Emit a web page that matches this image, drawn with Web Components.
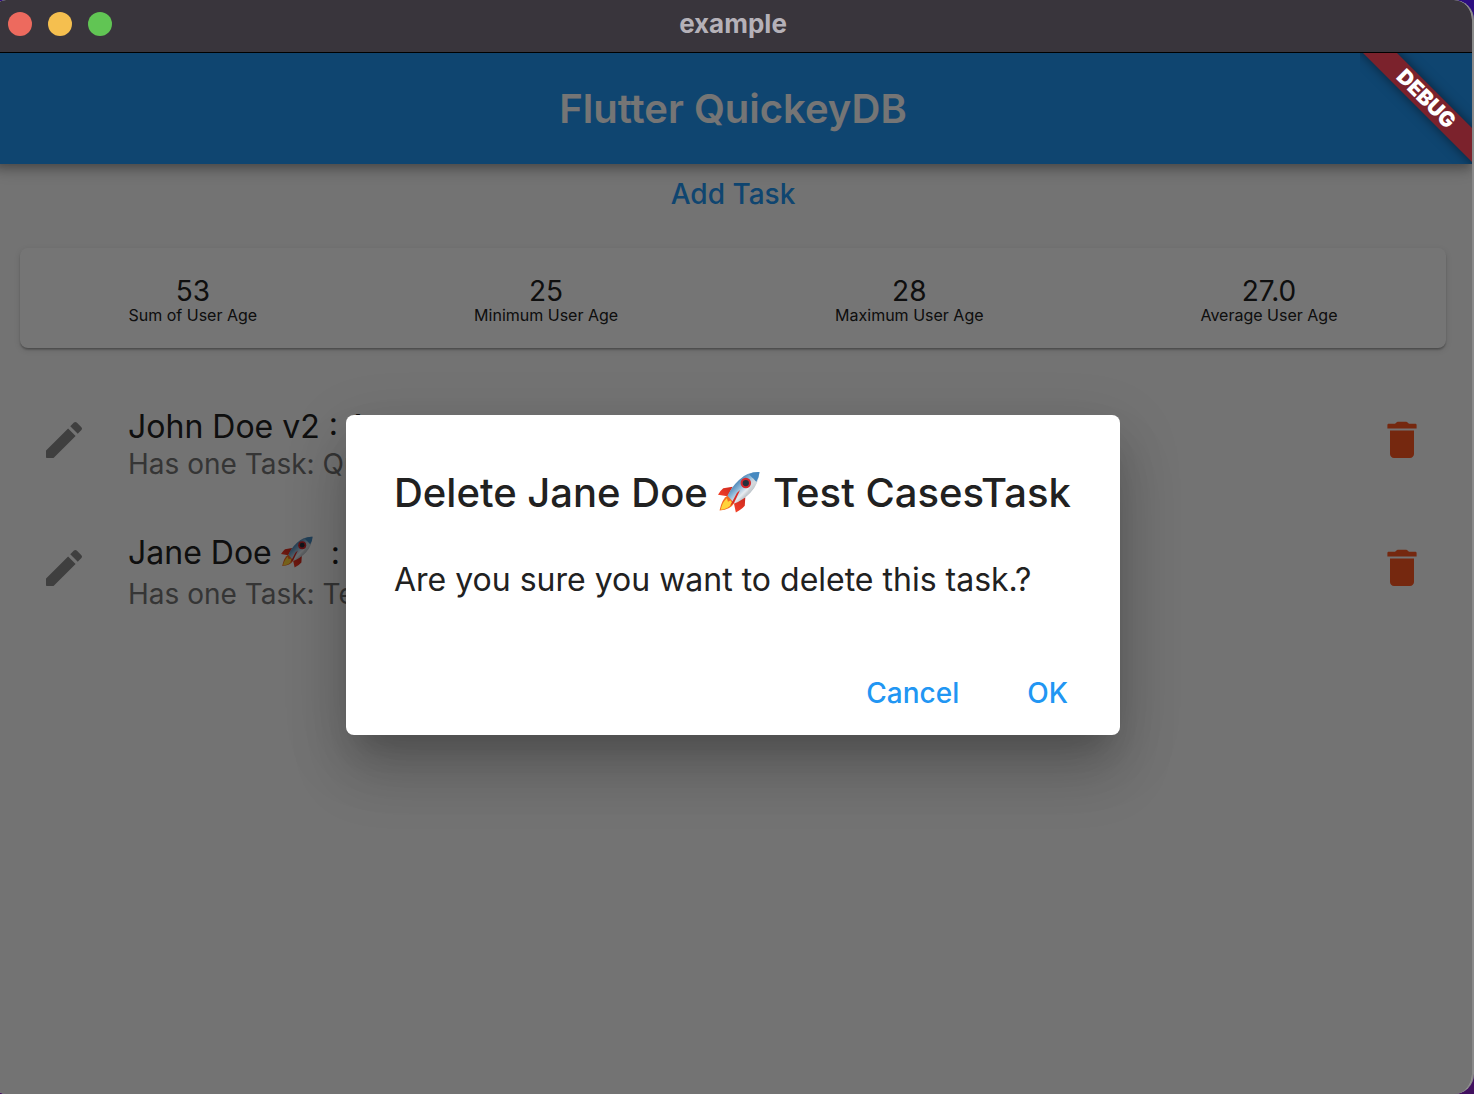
<!DOCTYPE html>
<html lang="en">
<head>
<meta charset="utf-8">
<title>example</title>
<style>
  html, body { height: 100%; }
  body {
    margin: 0;
    overflow: hidden;
    background: linear-gradient(#2c0d80, #41105f);
    font-family: Inter, "Liberation Sans", sans-serif;
    color: #212121;
  }
</style>
</head>
<body>
<desktop-window heading="example">
  <app-bar slot="content">Flutter QuickeyDB</app-bar>
  <task-page slot="content">
    <text-button slot="action">Add Task</text-button>
    <stat-card slot="stats">
      <stat-item value="53">Sum of User Age</stat-item>
      <stat-item value="25">Minimum User Age</stat-item>
      <stat-item value="28">Maximum User Age</stat-item>
      <stat-item value="27.0">Average User Age</stat-item>
    </stat-card>
    <task-row>John Doe v2 : A<span slot="subtitle">Has one Task: Qu</span></task-row>
    <task-row tall>Jane Doe <rocket-emoji></rocket-emoji>&nbsp; :<span slot="subtitle">Has one Task: Te</span></task-row>
  </task-page>
  <alert-dialog slot="overlay">
    <span slot="title">Delete Jane Doe <rocket-emoji></rocket-emoji> Test CasesTask</span>
    Are you sure you want to delete this task.?
    <text-button slot="actions">Cancel</text-button>
    <text-button slot="actions">OK</text-button>
  </alert-dialog>
  <debug-banner slot="overlay"></debug-banner>
</desktop-window>

<script>
function define(name, html) {
  const template = document.createElement('template');
  template.innerHTML = html;
  customElements.define(name, class extends HTMLElement {
    constructor() {
      super();
      const root = this.attachShadow({ mode: 'open' });
      root.append(template.content.cloneNode(true));
      for (const node of root.querySelectorAll('[data-attr]')) {
        node.textContent = this.getAttribute(node.dataset.attr) || '';
      }
    }
  });
}

define('desktop-window', `
  <style>
    :host { display: flex; flex-direction: column; box-sizing: border-box; height: 100vh;
      margin-left: -6px; border-right: 2px solid #8a8a8a; border-radius: 12px 20px 20px 12px; overflow: hidden; background: #fafafa; }
    header { flex: none; display: grid; grid-template-columns: 1fr auto 1fr; align-items: center;
      box-sizing: border-box; height: 53px; padding: 0 14px 4px; background: #39353c; border-bottom: 1px solid #000; }
    .lights { display: flex; gap: 16px; }
    .lights button { width: 24px; height: 24px; padding: 0; border: 0; border-radius: 50%; }
    .close { background: #ed6a5e; } .min { background: #f5bf4f; } .max { background: #61c554; }
    h1 { margin: 0; font-size: 26px; line-height: 32px; font-weight: 700; color: #b5b1b8; }
    main { flex: 1; position: relative; display: flex; flex-direction: column; overflow: hidden; }
  </style>
  <header>
    <div class="lights">
      <button class="close" aria-label="Close"></button>
      <button class="min" aria-label="Minimize"></button>
      <button class="max" aria-label="Zoom"></button>
    </div>
    <h1 data-attr="heading"></h1>
  </header>
  <main><slot name="content"></slot><slot name="overlay"></slot></main>
`);

define('app-bar', `
  <style>
    :host { flex: none; display: flex; align-items: center; justify-content: center; height: 111px;
      background: #2196f3; color: #fff; position: relative; z-index: 1;
      box-shadow: 0 4px 8px -2px rgba(0,0,0,.2), 0 8px 10px rgba(0,0,0,.14), 0 2px 20px rgba(0,0,0,.12); }
    h2 { margin: 0; font-size: 40px; line-height: 48px; font-weight: 600; }
  </style>
  <h2><slot></slot></h2>
`);

define('task-page', `
  <style>
    :host { display: flex; flex-direction: column; align-items: stretch; }
    .action { display: flex; justify-content: center; }
    .stats { margin: 24px 26px 28px; }
  </style>
  <div class="action"><slot name="action"></slot></div>
  <div class="stats"><slot name="stats"></slot></div>
  <slot></slot>
`);

define('text-button', `
  <style>
    :host { display: block; }
    button { font: inherit; font-size: 28px; line-height: 36px; font-weight: 500; color: #2196f3;
      background: none; border: 0; padding: 12px 16px; cursor: pointer; }
  </style>
  <button type="button"><slot></slot></button>
`);

define('stat-card', `
  <style>
    :host { display: flex; justify-content: space-around; padding: 29px 0 23px; background: #fff; border-radius: 8px;
      box-shadow: 0 2px 2px -1px rgba(0,0,0,.2), 0 2px 2px rgba(0,0,0,.14), 0 2px 6px rgba(0,0,0,.12); }
  </style>
  <slot></slot>
`);

define('stat-item', `
  <style>
    :host { display: flex; flex-direction: column; align-items: center; }
    .value { font-size: 28px; line-height: 28px; }
    .label { font-size: 16px; line-height: 20px; }
  </style>
  <span class="value" data-attr="value"></span>
  <span class="label"><slot></slot></span>
`);

define('task-row', `
  <style>
    :host { display: flex; align-items: center; height: 128px; padding: 0 46px;
      --emoji: 32px; --emoji-drop: -4px; --emoji-gap: 0; }
    button { flex: none; display: block; width: 48px; height: 48px; padding: 0; border: 0; background: none; }
    svg { display: block; width: 48px; height: 48px; }
    .edit { fill: #8a8a8a; } .delete { fill: #ff5722; }
    .text { flex: 1; padding: 10px 40px 0; white-space: nowrap; }
    .title { font-size: 32px; line-height: 38px; }
    :host([tall]) .title { line-height: 46px; }
    :host([tall]) .text { padding-top: 6px; }
    .subtitle { font-size: 28px; line-height: 36px; color: #747474; }
  </style>
  <button type="button" aria-label="Edit"><svg class="edit" viewBox="0 0 24 24"><path d="M3 17.460v3.040c0 .28.22.5.5.5h3.040c.13 0 .26-.05.35-.15L17.810 9.940l-3.750-3.750L3.150 17.100c-.1.1-.15.22-.15.36zM20.710 7.040a1 1 0 0 0 0-1.410l-2.340-2.340a1 1 0 0 0-1.410 0l-1.830 1.830 3.750 3.750 1.830-1.830z"/></svg></button>
  <div class="text">
    <div class="title"><slot></slot></div>
    <div class="subtitle"><slot name="subtitle"></slot></div>
  </div>
  <button type="button" aria-label="Delete"><svg class="delete" viewBox="0 0 24 24"><path d="M6 19c0 1.100.9 2 2 2h8c1.100 0 2-.9 2-2V7.200H6V19zM18.500 3.900h-3l-.71-.71c-.18-.18-.44-.29-.7-.29H9.910c-.26 0-.52.11-.7.29l-.71.71h-3c-.5 0-.8.2-.8.6v1.700h14.600V4.500c0-.4-.3-.6-.8-.6z"/></svg></button>
`);

define('rocket-emoji', `
  <style>
    :host { display: inline-block; vertical-align: var(--emoji-drop, -6px); margin-right: var(--emoji-gap, 2px);
      width: var(--emoji, 42px); height: var(--emoji, 42px); }
    svg { display: block; width: 100%; height: 100%; }
  </style>
  <svg viewBox="0 0 40 40" role="img" aria-label="rocket">
    <defs>
      <linearGradient id="body" x1="0" y1="0" x2="1" y2="1">
        <stop offset=".25" stop-color="#3776ad"/><stop offset=".44" stop-color="#8db8d8"/>
        <stop offset=".58" stop-color="#e8edf1"/><stop offset=".8" stop-color="#76828c"/>
      </linearGradient>
      <linearGradient id="fin" x1="1" y1="0" x2="0" y2="1">
        <stop offset="0" stop-color="#b5201c"/><stop offset=".6" stop-color="#ee3a26"/><stop offset="1" stop-color="#ff7a32"/>
      </linearGradient>
    </defs>
    <path fill="url(#fin)" d="M14 15 5 16.500Q2 19 0 22.500L9 24zM26 25l-.5 8Q22 37 17 39.500L15 30z"/>
    <path fill="url(#body)" d="M39.500 1Q28 .5 20 8.500 12 16 8.500 25l6 6.500Q24 28 31 20.500 39 12 39.500 1z"/>
    <path fill="#4689c0" d="M39.500 1q-6-.3-10 2.200l7 7.300Q39.300 6 39.500 1z"/>
    <path fill="#c9ced2" d="m33 6.500 3.500 4Q34 18 27 24z" opacity=".6"/>
    <circle cx="26.500" cy="11.500" r="5" fill="#d42a2e"/>
    <circle cx="26.500" cy="11.500" r="3" fill="#25313e"/>
    <path fill="#f36b22" d="M9 23.500Q4 26 1.500 37.500q10-.5 14-7z"/>
    <path fill="#ffd33b" d="M8.500 26Q4.500 29 2.500 37q8-1 11-6.500l-1.700-2.300-2.300 1z"/>
    <path fill="#d92b25" d="m18 21 3-3-5.500 12-4 3z"/>
  </svg>
`);

define('alert-dialog', `
  <style>
    :host { position: absolute; inset: 0; display: flex; align-items: center; justify-content: center;
      box-sizing: border-box; padding: 2px 0 0; background: rgba(0,0,0,.54); z-index: 2; }
    section { box-sizing: border-box; width: 774px; max-width: 90%; padding: 48px 36px 12px 48px; background: #fff; border-radius: 8px;
      box-shadow: 0 22px 30px -14px rgba(0,0,0,.16), 0 40px 60px rgba(0,0,0,.14), 0 18px 64px 4px rgba(0,0,0,.12); }
    h3 { margin: 0 0 33px; font-size: 40px; line-height: 60px; font-weight: 500; white-space: nowrap; }
    p { margin: 0 0 59px; font-size: 32px; line-height: 48px; }
    footer { display: flex; justify-content: flex-end; gap: 36px; }
  </style>
  <section role="dialog" aria-modal="true" aria-labelledby="title">
    <h3 id="title"><slot name="title"></slot></h3>
    <p><slot></slot></p>
    <footer><slot name="actions"></slot></footer>
  </section>
`);

define('debug-banner', `
  <style>
    :host { position: absolute; top: 0; right: 0; width: 112px; height: 111px; overflow: hidden; z-index: 3; pointer-events: none; }
    div { position: absolute; top: 34px; left: -34px; width: 200px; height: 24px; transform: rotate(45deg);
      background: #7b222c; color: #fff; box-shadow: 0 0 12px rgba(0,0,0,.5);
      font-size: 21px; line-height: 24px; font-weight: 900; text-align: center; }
  </style>
  <div>DEBUG</div>
`);
</script>
</body>
</html>
